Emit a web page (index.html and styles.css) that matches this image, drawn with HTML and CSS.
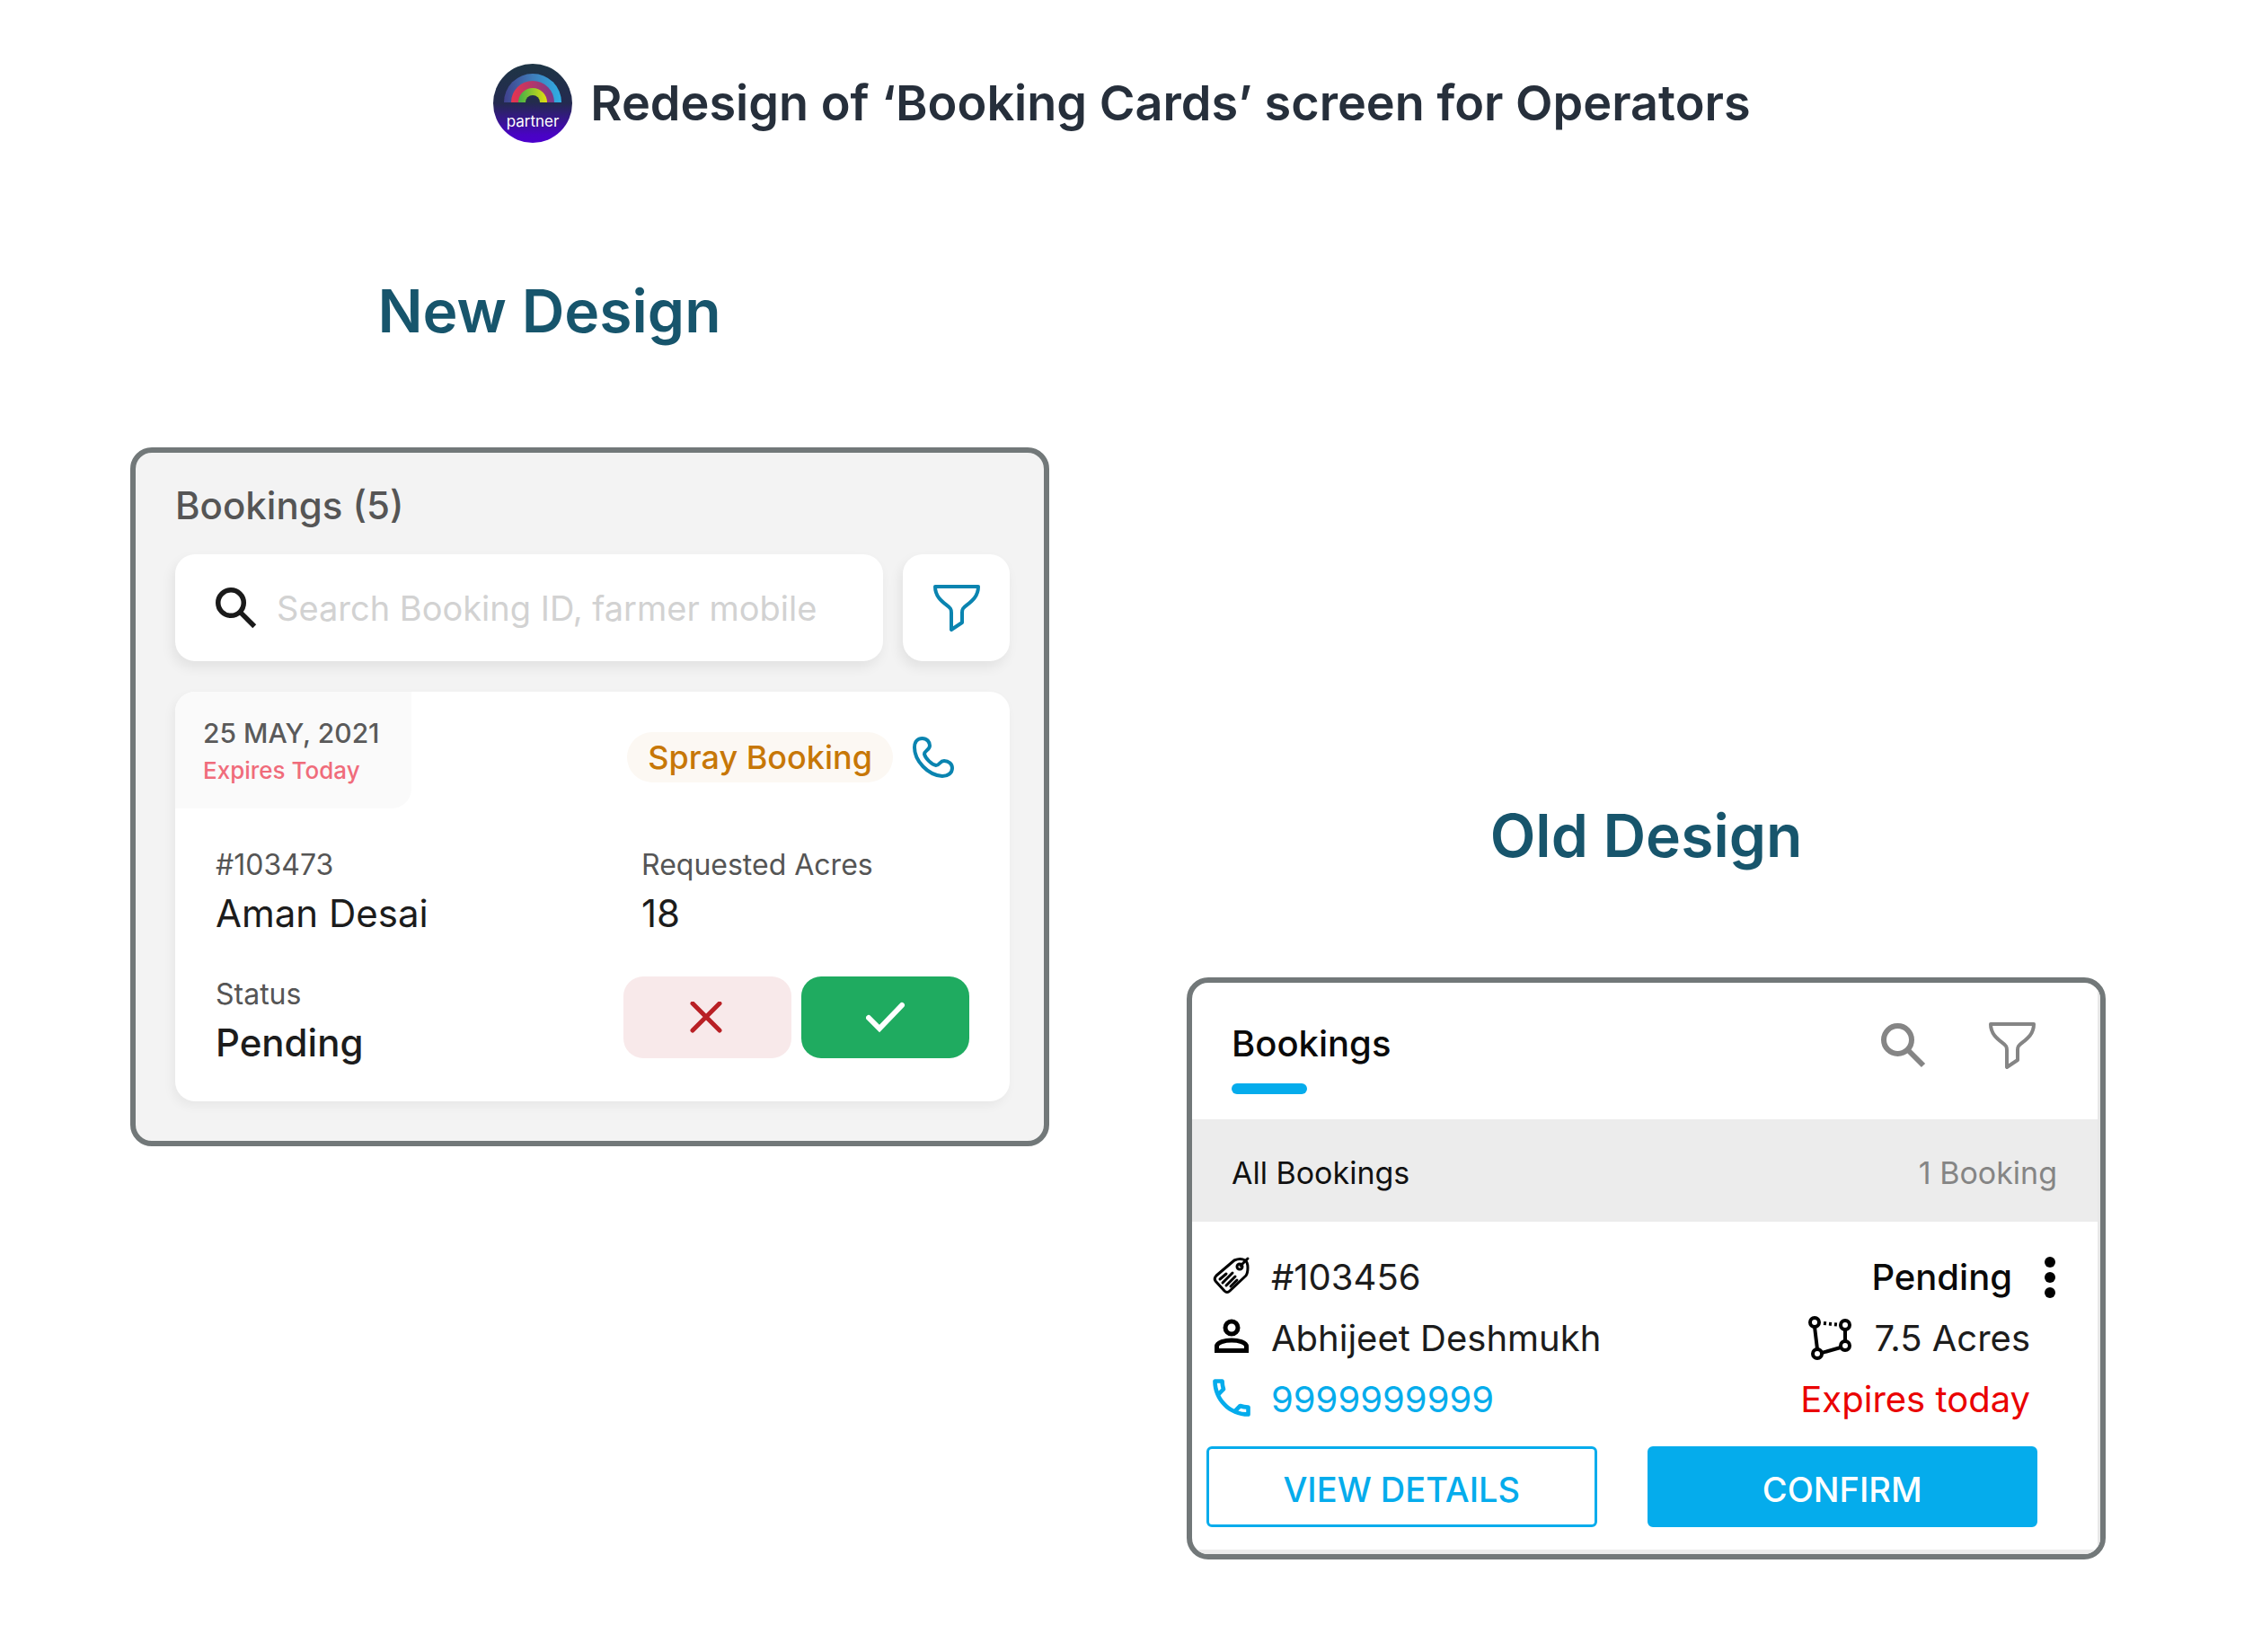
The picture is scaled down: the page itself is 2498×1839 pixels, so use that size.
FILE: index.html
```
<!DOCTYPE html>
<html lang="en">
<head>
    <meta charset="UTF-8">
    <meta name="viewport" content="width=device-width, initial-scale=1.0">
    <title>Redesign of Booking Cards</title>
    <link rel="stylesheet" href="styles.css">
</head>
<body>
    <header class="page-header">
        <svg class="logo" viewBox="0 0 88 88" role="img" aria-label="partner">
            <defs>
                <linearGradient id="logo-bg" x1="0" y1="0" x2="0" y2="1">
                    <stop offset="0" stop-color="#1e3545"/>
                    <stop offset="0.5" stop-color="#242a50"/>
                    <stop offset="0.9" stop-color="#4903c4"/>
                    <stop offset="1" stop-color="#4b00cc"/>
                </linearGradient>
                <linearGradient id="arc-blue">
                    <stop offset="0" stop-color="#40408c"/>
                    <stop offset="0.5" stop-color="#3f7dba"/>
                    <stop offset="1" stop-color="#2fb0e6"/>
                </linearGradient>
                <linearGradient id="arc-pink">
                    <stop offset="0" stop-color="#e8344e"/>
                    <stop offset="1" stop-color="#7a3a8a"/>
                </linearGradient>
                <linearGradient id="arc-green">
                    <stop offset="0" stop-color="#3fae49"/>
                    <stop offset="1" stop-color="#e3e010"/>
                </linearGradient>
            </defs>
            <circle cx="44" cy="44" r="44" fill="url(#logo-bg)"/>
            <path d="M12 43a32 32 0 0 1 64 0z" fill="url(#arc-blue)"/>
            <path d="M20 43a24 24 0 0 1 48 0z" fill="url(#arc-pink)"/>
            <path d="M28 43a16 16 0 0 1 32 0z" fill="url(#arc-green)"/>
            <path d="M36 43a8 8 0 0 1 16 0z" fill="#232c4c"/>
            <text class="logo-text" x="44" y="70" text-anchor="middle">partner</text>
        </svg>
        <h1>Redesign of ‘Booking Cards’ screen for Operators</h1>
    </header>

    <main class="board">
        <section class="column column-new">
            <h2>New Design</h2>
            <div class="frame new-frame">
                <h3>Bookings (5)</h3>
                <div class="search-row">
                    <label class="search-box">
                        <svg class="icon-search" viewBox="0 0 50 50" aria-hidden="true">
                            <circle cx="18.5" cy="18.5" r="15.5"/>
                            <path d="M30 30l17 17"/>
                        </svg>
                        <input type="text" placeholder="Search Booking ID, farmer mobile" aria-label="Search bookings">
                    </label>
                    <button class="filter-button" aria-label="Filter">
                        <svg class="icon-filter" viewBox="0 0 52 52" aria-hidden="true">
                            <path d="M2 2h48C50 17 36 22 33 26.500Q32 28 32 31V42L20 50V31Q20 28 19 26.500C16 22 2 17 2 2z"/>
                        </svg>
                    </button>
                </div>
                <article class="booking">
                    <div class="booking-top">
                        <div class="date-tab">
                            <p class="date">25 MAY, 2021</p>
                            <p class="expires">Expires Today</p>
                        </div>
                        <div class="booking-type">
                            <span class="tag">Spray Booking</span>
                            <button class="call-button" aria-label="Call">
                                <svg viewBox="0 0 46 46" aria-hidden="true">
                                    <path d="M2 12C2 5 6 2 10.500 2C16 2 19 6 19 10C19 15 13 15.500 13 19.500C14 24 21 31 26 32C30 32 30 27 35 27C40 27 44 30.500 44 35C44 40.500 39 44 33 44C17 43 2 27 2 12z"/>
                                </svg>
                            </button>
                        </div>
                    </div>
                    <div class="booking-body">
                        <div>
                            <p class="label">#103473</p>
                            <p class="value">Aman Desai</p>
                        </div>
                        <div class="acres">
                            <p class="label">Requested Acres</p>
                            <p class="value">18</p>
                        </div>
                        <div>
                            <p class="label">Status</p>
                            <p class="value status">Pending</p>
                        </div>
                        <div class="decision">
                            <button class="reject" aria-label="Reject">
                                <svg viewBox="0 0 44 36" aria-hidden="true"><path d="M5 2l30 30M35 2L5 32"/></svg>
                            </button>
                            <button class="accept" aria-label="Accept">
                                <svg viewBox="0 0 44 36" aria-hidden="true"><path d="M3 18l12 12L40 4"/></svg>
                            </button>
                        </div>
                    </div>
                </article>
            </div>
        </section>

        <section class="column column-old">
            <h2>Old Design</h2>
            <div class="frame old-frame">
                <div class="old-screen">
                    <div class="old-header">
                        <h3>Bookings</h3>
                        <div class="old-tools">
                            <button aria-label="Search">
                                <svg class="icon-search" viewBox="0 0 50 50" aria-hidden="true">
                                    <circle cx="18.5" cy="18.5" r="15.5"/>
                                    <path d="M30 30l17 17"/>
                                </svg>
                            </button>
                            <button aria-label="Filter">
                                <svg class="icon-filter" viewBox="0 0 52 52" aria-hidden="true">
                                    <path d="M2 2h48C50 17 36 22 33 26.500Q32 28 32 31V42L20 50V31Q20 28 19 26.500C16 22 2 17 2 2z"/>
                                </svg>
                            </button>
                        </div>
                    </div>
                    <div class="summary">
                        <span>All Bookings</span>
                        <span class="count">1 Booking</span>
                    </div>
                    <div class="details">
                        <div class="row row-first">
                            <svg class="row-icon" viewBox="0 0 44 44" fill="none" stroke="#000" stroke-width="3" stroke-linecap="round" stroke-linejoin="round" aria-hidden="true">
                                <path d="M25 5L5 22Q2 25 4 28L14 39Q17 42 20 39L38 22Q40 19 40 13Q40 7 37 5Q32 2 25 5z"/>
                                <circle cx="31" cy="12" r="3"/>
                                <path d="M32 11l8-8M9 26l7-6M12 30l11-11M16 33l10-10M21 34l7-7"/>
                            </svg>
                            <span>#103456</span>
                            <span class="row-end old-status">Pending</span>
                            <button class="more" aria-label="More options">
                                <svg viewBox="0 0 12 46" aria-hidden="true">
                                    <circle cx="6" cy="6" r="6"/><circle cx="6" cy="23" r="6"/><circle cx="6" cy="40" r="6"/>
                                </svg>
                            </button>
                        </div>
                        <div class="row">
                            <svg class="row-icon" viewBox="0 0 44 44" fill="none" stroke="#000" stroke-width="5" aria-hidden="true">
                                <circle cx="22" cy="12" r="7"/>
                                <path d="M5.500 37.500V33C5.500 28 15 26 22 26S38.500 28 38.500 33V37.500z"/>
                            </svg>
                            <span>Abhijeet Deshmukh</span>
                            <span class="row-end">
                                <svg class="icon-area" viewBox="0 0 50 50" fill="none" stroke="#000" stroke-width="4" aria-hidden="true">
                                    <circle cx="7" cy="7" r="5"/>
                                    <circle cx="41" cy="10" r="5"/>
                                    <circle cx="41" cy="33" r="5"/>
                                    <circle cx="10" cy="42" r="5"/>
                                    <path d="M7 12l3 25M15 41l21-6M41 15v13"/>
                                    <path d="M17 8l19 2" stroke-dasharray="3 3"/>
                                </svg>
                                7.5 Acres
                            </span>
                        </div>
                        <div class="row">
                            <svg class="row-icon" viewBox="2.500 2.500 19 19" fill="#05acec" aria-hidden="true">
                                <path d="M6.540 5c.06.89.21 1.760.45 2.590l-1.200 1.200c-.41-1.200-.67-2.470-.76-3.790h1.510m9.860 12.020c.85.24 1.720.39 2.600.45v1.490c-1.320-.09-2.590-.35-3.800-.75l1.200-1.190M7.500 3H4c-.55 0-1 .45-1 1 0 9.390 7.610 17 17 17 .55 0 1-.45 1-1v-3.490c0-.55-.45-1-1-1-1.240 0-2.450-.2-3.570-.57-.1-.04-.21-.05-.31-.05-.26 0-.51.1-.71.29l-2.200 2.200c-2.830-1.450-5.150-3.760-6.590-6.590l2.200-2.200c.28-.28.36-.67.25-1.020C8.700 6.450 8.500 5.250 8.500 4c0-.55-.45-1-1-1z"/>
                            </svg>
                            <a class="phone" href="tel:9999999999">9999999999</a>
                            <span class="row-end overdue">Expires today</span>
                        </div>
                    </div>
                    <div class="actions">
                        <button class="view">VIEW DETAILS</button>
                        <button class="confirm">CONFIRM</button>
                    </div>
                </div>
            </div>
        </section>
    </main>
</body>
</html>
```
FILE: styles.css
```
* {
    box-sizing: border-box;
}
body {
    margin: 0;
    background: #fff;
    font-family: Inter, "Open Sans", sans-serif;
    font-size: 40px;
    line-height: 48px;
    color: #1c1c1c;
}
h1, h2, h3, p {
    margin: 0;
    font-weight: 500;
}
button {
    display: flex;
    align-items: center;
    justify-content: center;
    padding: 0;
    border: none;
    background: none;
    font: inherit;
    cursor: pointer;
}
svg {
    display: block;
    flex-shrink: 0;
}

/* Header */
.page-header {
    display: flex;
    justify-content: center;
    align-items: center;
    gap: 20px;
    padding-top: 71px;
}
.page-header h1 {
    font-size: 54px;
    font-weight: 600;
    line-height: 88px;
    color: #262f3b;
}
.logo {
    width: 88px;
    height: 88px;
}
.logo-text {
    font-size: 17px;
    fill: #fff;
}

/* Two designs side by side */
.board {
    display: grid;
    grid-template-columns: 1fr 1fr;
    align-items: start;
    gap: 153px;
    padding: 139px 154px 100px 145px;
}
.column h2 {
    font-size: 66px;
    font-weight: 600;
    line-height: 96px;
    color: #17556c;
    text-align: center;
}
.column-new h2 {
    padding-right: 90px;
    margin-bottom: 104px;
}
.column-old {
    padding-top: 584px;
}
.column-old h2 {
    margin-bottom: 110px;
}
.frame {
    border: 6px solid #727879;
    border-radius: 24px;
    overflow: hidden;
}

/* Shared icons */
.icon-search {
    width: 50px;
    height: 50px;
    fill: none;
    stroke: #858585;
    stroke-width: 6;
}
.icon-filter {
    width: 52px;
    height: 52px;
    fill: none;
    stroke: #858585;
    stroke-width: 4;
    stroke-linejoin: round;
}

/* New design */
.new-frame {
    padding: 35px 38px 44px 44px;
    background: #f3f3f3;
}
.new-frame h3 {
    font-size: 42px;
    color: #555;
}
.search-row {
    display: flex;
    gap: 22px;
    margin: 30px 0 34px;
}
.search-box {
    flex: 1;
    display: flex;
    align-items: center;
    gap: 22px;
    height: 119px;
    padding: 0 45px;
    background: #fff;
    border-radius: 22px;
    box-shadow: -3px 7px 14px rgba(0, 0, 0, 0.07);
}
.search-box .icon-search {
    width: 46px;
    height: 46px;
    stroke: #1a1a1a;
}
.search-box input {
    flex: 1;
    min-width: 0;
    padding: 0;
    border: none;
    outline: none;
    background: none;
    font: inherit;
    font-size: 38px;
}
.search-box input::placeholder {
    color: #d2d2d2;
    opacity: 1;
}
.filter-button {
    width: 119px;
    height: 119px;
    background: #fff;
    border-radius: 22px;
    box-shadow: -3px 7px 14px rgba(0, 0, 0, 0.07);
}
.filter-button .icon-filter {
    stroke: #0a84b0;
}
.booking {
    background: #fff;
    border-radius: 22px;
    box-shadow: -3px 5px 12px rgba(0, 0, 0, 0.05);
}
.booking-top {
    display: flex;
    justify-content: space-between;
    align-items: flex-start;
    padding-right: 62px;
}
.date-tab {
    min-width: 263px;
    padding: 26px 31px;
    background: #fafafa;
    border-radius: 22px 0;
}
.date {
    margin-bottom: 6px;
    font-size: 30px;
    line-height: 40px;
    color: #5a5a5a;
}
.expires {
    font-size: 26px;
    line-height: 32px;
    color: #f06c7b;
}
.booking-type {
    display: flex;
    align-items: center;
    gap: 22px;
    margin-top: 45px;
}
.tag {
    padding: 4px 23px;
    background: #fcf8f3;
    border-radius: 28px;
    font-size: 36px;
    font-weight: 500;
    color: #c77707;
}
.call-button svg {
    width: 46px;
    height: 46px;
    fill: none;
    stroke: #0a84b0;
    stroke-width: 4;
}
.booking-body {
    display: grid;
    grid-template-columns: 1fr 385px;
    row-gap: 46px;
    padding: 43px 45px 41px 45px;
}
.label {
    margin-bottom: 10px;
    font-size: 32px;
    font-weight: 400;
    line-height: 40px;
    color: #555;
}
.value {
    font-size: 42px;
    font-weight: 400;
}
.status {
    font-weight: 500;
}
.acres {
    padding-left: 20px;
}
.decision {
    display: grid;
    grid-template-columns: 1fr 1fr;
    align-items: start;
    gap: 11px;
}
.decision button {
    height: 91px;
    border-radius: 22px;
}
.decision svg {
    width: 44px;
    height: 36px;
    fill: none;
    stroke-width: 5;
    stroke-linecap: round;
}
.decision .reject {
    background: #f8e9ea;
    stroke: #b92025;
}
.decision .accept {
    background: #1fab60;
    stroke: #fff;
}
.decision .accept svg {
    stroke-width: 6;
}

/* Old design */
.old-screen {
    border-right: 3px solid #e8e8e8;
    border-bottom: 5px solid #ebebeb;
}
.old-header {
    display: flex;
    justify-content: space-between;
    align-items: flex-start;
    padding: 44px 69px 28px 44px;
}
.old-header h3 {
    font-size: 40px;
    color: #0a0a0a;
}
.old-header h3::after {
    content: "";
    display: block;
    width: 84px;
    height: 12px;
    margin-top: 20px;
    background: #05acec;
    border-radius: 6px;
}
.old-tools {
    display: flex;
    gap: 70px;
}
.summary {
    display: flex;
    justify-content: space-between;
    padding: 36px 45px 30px 44px;
    background: #ececec;
    font-size: 34px;
    color: #111;
}
.summary .count {
    color: #858585;
}
.details {
    padding: 28px 75px 0 22px;
}
.row {
    display: flex;
    align-items: center;
    height: 68px;
}
.row-first {
    margin-right: -28px;
}
.row-icon {
    width: 44px;
    height: 48px;
    padding-bottom: 4px;
    margin-right: 22px;
}
.row-end {
    display: flex;
    align-items: center;
    gap: 24px;
    margin-left: auto;
}
.icon-area {
    width: 50px;
    height: 50px;
}
.old-status {
    font-weight: 500;
    color: #0a0a0a;
}
.more {
    margin-left: 36px;
}
.more svg {
    width: 12px;
    height: 46px;
}
.phone {
    color: #05acec;
    text-decoration: none;
}
.overdue {
    color: #ea0000;
}
.actions {
    display: grid;
    grid-template-columns: 1fr 1fr;
    gap: 56px;
    padding: 18px 67px 25px 16px;
}
.actions button {
    height: 90px;
    padding-top: 6px;
    border: 3px solid #05acec;
    border-radius: 6px;
    font-size: 38px;
    font-weight: 500;
}
.actions .view {
    color: #05acec;
}
.actions .confirm {
    background: #05acec;
    color: #fff;
}
```
